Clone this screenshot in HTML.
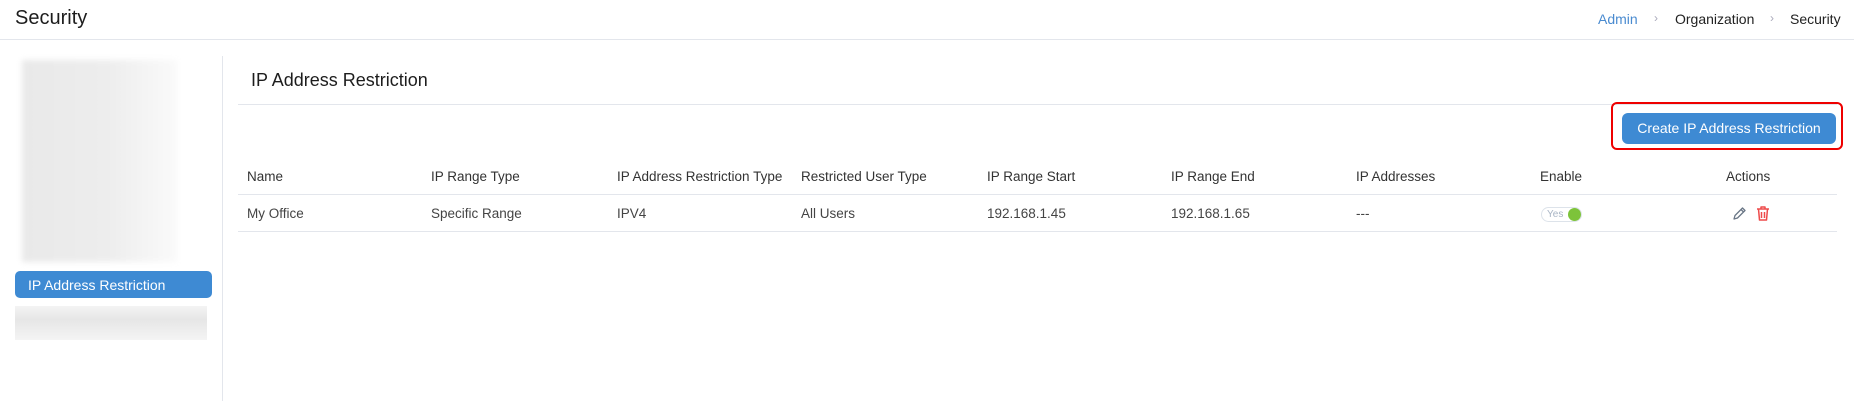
<!DOCTYPE html>
<html><head><meta charset="utf-8"><style>
*{margin:0;padding:0;box-sizing:border-box}
body{width:1854px;height:401px;background:#fff;font-family:"Liberation Sans",sans-serif;position:relative;overflow:hidden;color:#222}
.a{position:absolute;white-space:nowrap}
.h{font-size:13.5px;color:#333;top:169px}
.r{font-size:13.5px;color:#444;top:206px}
</style></head><body>
<div class="a" style="left:15px;top:7px;font-size:20px;color:#1d1d1d">Security</div>
<div class="a" style="left:0;top:39px;width:1854px;height:1px;background:#e3e6ec"></div>
<div class="a" style="left:1598px;top:11px;font-size:14px;color:#4a8bd0">Admin</div>
<div class="a" style="left:1654px;top:11px;font-size:12px;color:#aab">›</div>
<div class="a" style="left:1675px;top:11px;font-size:14px;color:#222">Organization</div>
<div class="a" style="left:1770px;top:11px;font-size:12px;color:#aab">›</div>
<div class="a" style="left:1790px;top:11px;font-size:14px;color:#222">Security</div>

<div class="a" style="left:22px;top:60px;width:155px;height:202px;background:linear-gradient(90deg,#e9e9e9 0%,#ededed 55%,#fafafa 100%);filter:blur(3px)"></div>
<div class="a" style="left:15px;top:271px;width:197px;height:27px;background:#3e8ad3;border-radius:5px"></div>
<div class="a" style="left:28px;top:277px;font-size:14px;color:#fff">IP Address Restriction</div>
<div class="a" style="left:15px;top:306px;width:192px;height:34px;background:linear-gradient(180deg,#f4f4f4,#e6e6e6 40%,#f4f4f4);"></div>
<div class="a" style="left:222px;top:56px;width:1px;height:345px;background:#e3e6ec"></div>

<div class="a" style="left:251px;top:70px;font-size:18px;color:#1d1d1d">IP Address Restriction</div>
<div class="a" style="left:238px;top:104px;width:1599px;height:1px;background:#e3e6ec"></div>
<div class="a" style="left:1611px;top:102px;width:232px;height:48px;border:2px solid #e00;border-radius:6px"></div>
<div class="a" style="left:1622px;top:113px;width:214px;height:31px;background:#3e8ad3;border-radius:6px;color:#fff;font-size:14px;text-align:center;line-height:31px">Create IP Address Restriction</div>

<div class="a h" style="left:247px">Name</div>
<div class="a h" style="left:431px">IP Range Type</div>
<div class="a h" style="left:617px">IP Address Restriction Type</div>
<div class="a h" style="left:801px">Restricted User Type</div>
<div class="a h" style="left:987px">IP Range Start</div>
<div class="a h" style="left:1171px">IP Range End</div>
<div class="a h" style="left:1356px">IP Addresses</div>
<div class="a h" style="left:1540px">Enable</div>
<div class="a h" style="left:1726px">Actions</div>
<div class="a" style="left:238px;top:194px;width:1599px;height:1px;background:#e3e6ec"></div>
<div class="a r" style="left:247px">My Office</div>
<div class="a r" style="left:431px">Specific Range</div>
<div class="a r" style="left:617px">IPV4</div>
<div class="a r" style="left:801px">All Users</div>
<div class="a r" style="left:987px">192.168.1.45</div>
<div class="a r" style="left:1171px">192.168.1.65</div>
<div class="a r" style="left:1356px">---</div>
<div class="a" style="left:1541px;top:207px;width:41px;height:15px;border:1px solid #dde3ea;border-radius:8px"></div>
<div class="a" style="left:1547px;top:209px;font-size:10px;color:#a8b4c4">Yes</div>
<div class="a" style="left:1568px;top:208px;width:13px;height:13px;border-radius:50%;background:#7dc33a"></div>
<svg class="a" style="left:1731px;top:206px" width="16" height="16" viewBox="0 0 16 16"><path d="M3 13l1-3.5L11.5 2l2.5 2.5L6.5 12z M10 3.5l2.5 2.5" fill="none" stroke="#6a7686" stroke-width="1.3" stroke-linejoin="round"/></svg>
<svg class="a" style="left:1755px;top:205px" width="16" height="17" viewBox="0 0 16 17"><path d="M2 4h12 M6 4V2h4v2 M3.5 4l1 11h7l1-11 M6.5 7v6 M9.5 7v6" fill="none" stroke="#ee4b4b" stroke-width="1.5" stroke-linejoin="round"/></svg>
<div class="a" style="left:238px;top:231px;width:1599px;height:1px;background:#e3e6ec"></div>
</body></html>
